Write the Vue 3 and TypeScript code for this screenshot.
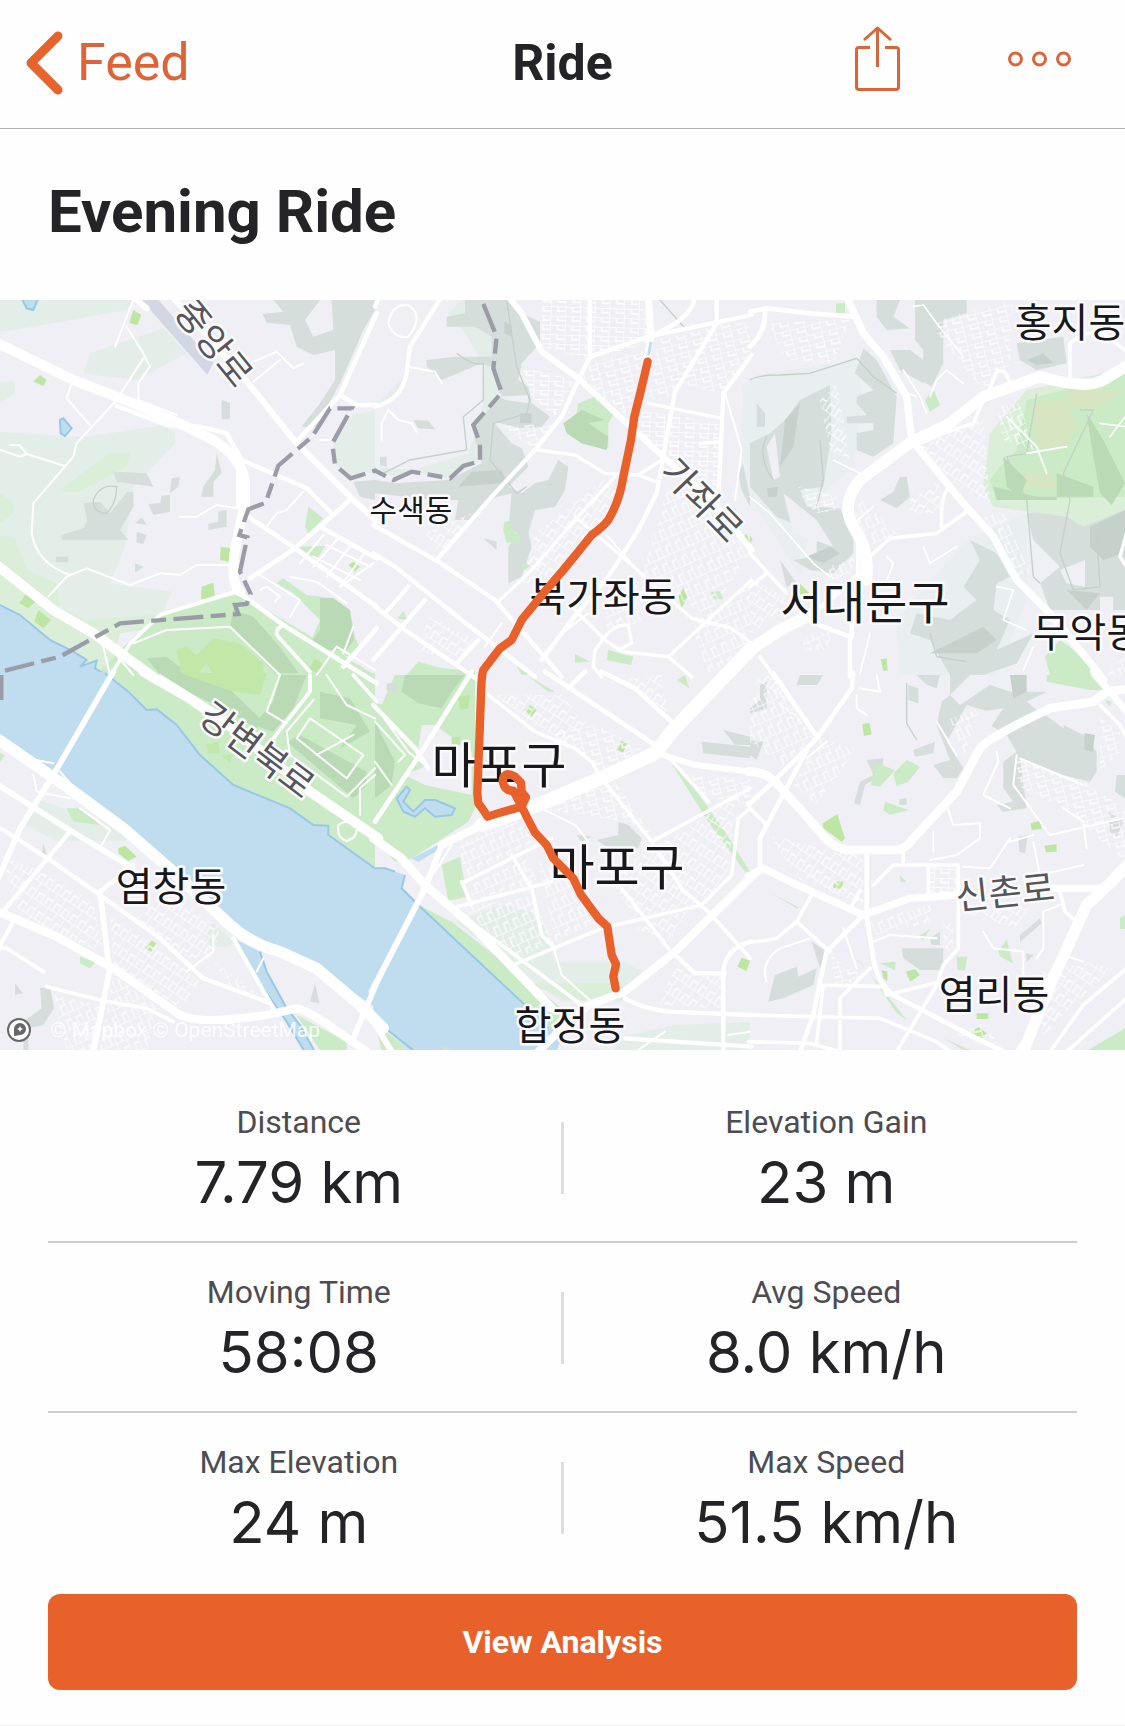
<script setup lang="ts">
interface Shape { c: string; d: string }
interface Road { w: number; d: string }
interface Tile { x: number; y: number; areas: Shape[]; streets: Road[]; roads: Road[] }
interface Place { text: string; x: number; y: number; size: number; angle?: number; minor?: boolean }

const stats = [
  [{ label: 'Distance', value: '7.79 km' }, { label: 'Elevation Gain', value: '23 m' }],
  [{ label: 'Moving Time', value: '58:08' }, { label: 'Avg Speed', value: '8.0 km/h' }],
  [{ label: 'Max Elevation', value: '24 m' }, { label: 'Max Speed', value: '51.5 km/h' }],
]

const places: Place[] = [
  { text: '중앙로', x: 214, y: 43, size: 36, angle: 51, minor: true },
  { text: '가좌로', x: 702, y: 200, size: 36, angle: 46, minor: true },
  { text: '강변북로', x: 257, y: 450, size: 36, angle: 37, minor: true },
  { text: '신촌로', x: 1005, y: 592, size: 36, angle: -6, minor: true },
  { text: '수색동', x: 411, y: 210, size: 30 },
  { text: '북가좌동', x: 603, y: 296, size: 40 },
  { text: '홍지동', x: 1070, y: 22, size: 40 },
  { text: '서대문구', x: 865, y: 302, size: 46 },
  { text: '무악동', x: 1088, y: 332, size: 40 },
  { text: '염창동', x: 171, y: 586, size: 40 },
  { text: '마포구', x: 499, y: 465, size: 49 },
  { text: '마포구', x: 617, y: 567, size: 49 },
  { text: '합정동', x: 570, y: 725, size: 40 },
  { text: '염리동', x: 994, y: 694, size: 40 },
]

// Each tile covers a third of the map's width and half of its height.
const tiles: Tile[] = [
  {
    x: 0, y: 0,
    areas: [
      { c: 'pale', d: 'M0 0H400L380 30L100 80L0 95ZM270 160L490 85L560 160L410 240L250 220ZM0 245H45V280L0 310ZM0 395L250 412L490 375L525 400V430L400 560L375 740L330 850L515 875L490 940L280 1000L0 780Z' },
      { c: 'light', d: 'M170 575L330 460L390 458L380 500L235 575ZM0 580L40 610V640L0 670ZM0 705L45 715L80 810L170 850L180 925L260 960L460 945L600 920L700 900L640 960L360 1000L330 1125H250L220 1070L0 915Z' },
      { c: 'park', d: 'M720 880L850 960L1125 1125H290L400 1010L480 950ZM850 835L920 885L1000 895L1050 930L1065 1010L1078 1040L1040 1070H970L930 1030L960 960L880 880L830 850ZM915 680L925 620L970 655L925 700ZM895 740L975 738L950 780Z' },
      { c: 'hill', d: 'M700 930L760 950L835 1035L900 1125H830L690 980ZM440 1075L500 1070L570 1125H480ZM960 895H1000L1050 930L1062 1020L1040 1050H960L930 1030L960 990Z' },
      { c: 'bright', d: 'M400 30L424 45L412 76L388 68ZM100 245L120 225L140 240L130 258ZM662 740L690 745L688 785L660 780ZM605 860L640 848L645 895L603 898ZM80 880L110 900L85 925L58 910ZM115 930L153 960L130 985L103 965ZM1045 795L1060 785L1080 800L1065 815ZM945 1075L972 1095L955 1120L928 1105Z' },
      { c: 'lime', d: 'M530 1050L560 1040L590 1065L640 1015L720 1030L790 1090V1125H640L620 1090L590 1125H545Z' },
      { c: 'pale', d: 'M1125 330L1060 345L1000 430L1008 495L1052 535L1125 512Z' },
      { c: 'wood', d: 'M820 0H1125V30L1090 90L1060 160L1020 250L950 380H905L960 310L1005 240V150L940 165L890 140L870 75L800 68L788 42L850 35Z' },
      { c: 'ground', d: 'M915 60L960 0H995L1000 90L940 110Z' },
      { c: 'wood', d: 'M340 515L440 520L460 560L350 545ZM185 705L250 685L262 660L250 610L300 605L330 640L380 577H400V620L360 690L385 720H185ZM515 535L540 530L535 560L510 580ZM445 612L480 610L485 588L510 585V635L460 645ZM650 460L665 520L640 545V590H603L610 560L645 510ZM625 672L655 665V635L680 630V680L625 690ZM665 300L690 310V358H665ZM168 770H205V787H168ZM410 695L440 705L430 732L410 728ZM405 670L425 652L440 675ZM405 790L430 800L405 818ZM1060 545L1125 540V600L1080 590Z' },
      { c: 'runway', d: 'M425 0H475L640 188L622 224Z' },
      { c: 'water', d: 'M-10 910L60 945L150 1020L220 1055L260 1080L240 1100L290 1082L285 1105L325 1135H-10ZM65 -5L80 25L100 30L115 -5ZM180 360L190 355L215 385L195 408L182 400Z' },
      { c: 'shore', d: 'M-10 910L60 945L150 1020L220 1055L260 1080L240 1100L290 1082L285 1105L325 1130M65 -5L80 25L100 30L115 -5M180 360L190 355L215 385L195 408L182 400Z' },
    ],
    streets: [
      { w: 6, d: 'M400 0L345 140M380 80L430 160L450 200L415 250L415 300L530 345M430 175L350 300L230 430L220 470L100 610L95 700Q110 790 210 825M215 250L200 295L270 375M0 450L60 470L80 462L195 498M30 435L60 436L80 462M145 890L200 830L260 805L390 855L480 820L540 825L590 795H690M540 650H590L650 615L710 625M750 190L830 155L880 205L910 190M840 180L760 245M800 680L830 640L860 630L910 575M960 420H1000M780 825L900 900L870 950M870 830L950 845L1040 910M970 705L900 790M1010 720L940 800M1050 740L980 830M1090 765L1020 860M940 770L1080 840M980 735L1110 800M1020 860L1120 790M400 1030L500 990L690 980L840 1125M300 1000L330 1125M320 1030L400 1125M780 870L800 860L840 890L825 905M950 1125L1010 1040L1125 1110M1060 980L1030 1060' },
    ],
    roads: [
      { w: 30, d: 'M-10 128L220 240L400 310L560 380L640 420Q720 470 735 540V610L705 750Q690 850 720 875' },
      { w: 13, d: 'M350 318L500 375L600 380L680 400L725 480L920 565L990 635M715 500V620' },
      { w: 30, d: 'M-10 795L160 930L280 1000L465 1135' },
      { w: 18, d: 'M400 -10L440 25M500 -30L745 250L890 430L1050 590L1130 665' },
      { w: 14, d: 'M890 425L1020 285L1130 40M1020 285L1070 315H1130M1050 600L885 745L750 835M745 650L885 745L1130 920M960 680L1130 775M720 880L850 975L1130 1150M1130 985L1030 1100' },
      { w: 11, d: 'M720 870L640 895L480 945L390 1030L330 1130M850 975Q820 990 835 1010L930 1115' },
    ],
  },
  {
    x: 1125, y: 0,
    areas: [
      { c: 'pale', d: 'M0 510L60 530L115 515L230 535L315 480L300 380L380 280L360 120L320 0H260L100 150V220L0 320Z' },
      { c: 'ground', d: 'M0 320L70 290L105 140L200 20L270 100L330 200L320 340L280 460L115 510L0 500Z' },
      { c: 'wood', d: 'M215 50L270 40V0H400L440 40L495 65V130L440 190L430 240L460 260L470 310L525 350L500 380L430 385L370 370L440 440L460 500L400 560L440 580L480 550L520 540L550 480L580 500L570 570L540 620L480 630L460 700L470 740L440 830L400 850V740L430 700L400 690L410 580L330 600L300 660H240L250 600H180L0 580V540L60 550L220 540L320 490L290 380L380 290L350 200L320 190L200 240L155 200V180L240 170H350V110L300 80H215ZM115 360L160 362L180 388L130 385ZM325 715L365 725V750ZM1090 520L1125 450V620L1100 570ZM15 470H35V500L15 495Z' },
      { c: 'ground', d: 'M375 290L460 285V310L390 300ZM355 365L420 380L500 430L470 460L410 430Z' },
      { c: 'dark', d: 'M250 560L290 515L380 510L395 548ZM435 340H470V370H435ZM388 65L410 75V110L388 100Z' },
      { c: 'park', d: 'M610 310L660 290L715 345L700 370V445L620 430L570 390L600 365ZM388 665L410 662L415 695L440 705L430 728H395L385 690ZM435 785L470 795L450 810ZM1008 875L1040 873L1043 898H1010ZM700 1050L775 1070L768 1095L695 1080ZM600 1062L645 1085L600 1088ZM68 955L85 933L98 962ZM90 1130L130 1085L200 1105L300 1112V1130ZM425 1098L460 1125H440Z' },
      { c: 'hill', d: 'M565 370L620 330L690 360L640 370L700 410L695 450L620 430L575 400Z' },
      { c: 'bright', d: 'M910 890L925 865L938 890L920 925ZM1098 715L1115 702L1125 730Z' },
    ],
    streets: [
      { w: 0, d: 'M500 0H820V130L640 180L500 140ZM440 200L600 240L540 350L470 290ZM1030 370V600L900 500L780 400L800 330Z' },
      { w: 1, d: 'M640 190L810 150L760 350L620 240ZM850 120L1020 80L890 290L820 300ZM1030 70H1125V160L1040 280L910 250ZM380 380L540 370L480 450Z' },
      { w: 2, d: 'M480 700L700 530L730 560L690 690L540 850L440 850ZM150 700L290 640L200 770ZM160 950L300 1020L240 1090L130 1050Z' },
      { w: 3, d: 'M880 560L1030 600L1125 760L1000 950L800 830ZM950 980L1125 850V1060L1000 1120ZM700 850L830 860L800 970L690 990Z' },
      { w: 6, d: 'M40 70Q50 10 100 15Q150 50 100 110Q60 120 40 70M100 200L180 215L200 250M40 330L20 370V420M40 330L70 360L110 370L125 395M1050 280L1100 450L1080 600M690 700L830 860M560 1000L640 940M380 970L330 1040' },
    ],
    roads: [
      { w: 18, d: 'M400 -10L440 40L500 155L610 235L745 360L870 475L1000 590L1130 750' },
      { w: 20, d: 'M820 -10L828 110L790 300' },
      { w: 13, d: 'M1130 45L820 110L645 170L610 240L560 350L480 450L350 590L185 780M960 -10Q950 60 830 105M645 -10V170M1025 -10V70L900 275L870 440L845 580L790 690L700 830L590 960L500 1080M1130 165L1045 280L1030 600M200 -10L105 140L95 220Q80 300 0 320M20 -30L0 20' },
      { w: 10, d: 'M820 310L1040 355M490 450L600 465L690 520L790 525L860 480M975 430L1040 425M370 905L470 810L600 660L720 530M790 525L840 545' },
      { w: 13, d: 'M-5 675L190 785L360 900L560 1130M-5 760L60 800L260 960L480 1130M0 920L90 990L310 1140M150 900L-5 1080M100 860L30 940M310 1020L245 1090' },
      { w: 10, d: 'M600 650L730 760L950 955L1070 985L1130 1030M600 930L690 1020L740 1055L880 1070L950 1130M690 1010Q720 970 760 975L770 1030L730 1050M690 1010L660 1050L655 1100L680 1130M1130 840L880 1070' },
    ],
  },
  {
    x: 2250, y: 0,
    areas: [
      { c: 'mist', d: 'M-30 450L-20 260L20 225L320 180L340 300L310 500L200 600L150 830L0 590ZM440 960L650 720L830 640V900L740 1125H450Z' },
      { c: 'wood', d: 'M380 0H450L430 50L478 85L410 90L380 50ZM495 0H650V40L580 60V190L545 260L520 245V150L495 120ZM340 145L380 180L440 290L430 430L370 470L320 450V400L370 390V370H290V350L350 345L320 310V290L370 270L315 220ZM420 150H480L520 180V250L450 210ZM0 430L60 400L105 360L150 300L240 255L245 400L220 560L150 570L170 620L270 625L310 720V760L250 820L180 810L130 780L200 770V700L80 650L0 560ZM90 780L140 850L110 860ZM20 310L45 340V380H20ZM800 130L940 110L950 190L860 210L810 180ZM390 600L430 575L450 530H470L480 590L440 625ZM830 640L1125 600V930H900L870 850L930 800L850 720ZM660 720L740 760L780 830L740 850L730 930L780 960L740 1050L850 1000L800 1090L700 1125H600L540 1020L480 1000L500 940L600 960L680 900L640 860L690 780Z' },
      { c: 'ground', d: 'M50 440L75 400L90 530L70 540ZM100 580L200 660L250 740L130 700ZM930 810L1005 780V860L950 850ZM1050 890H1090V930H1050Z' },
      { c: 'light', d: 'M730 620L700 560L720 400L830 270L1125 205V630L1000 680L950 650Z' },
      { c: 'park', d: 'M800 450L830 300L1125 220V590L740 600L720 540L750 500ZM525 300L550 268L570 315L540 335ZM258 10H285V40H258ZM885 1070L930 1020L960 1040L1045 1125H900Z' },
      { c: 'beige', d: 'M850 310L950 300L980 380L940 450L860 440ZM950 270H1125L1030 330L960 310ZM800 520H900L930 560H820Z' },
      { c: 'hill', d: 'M730 560L860 590H1030V560L920 520V600H740ZM1010 340L1060 420L1125 550L1085 615L1050 580L1030 470ZM760 470L830 540L810 590L770 560Z' },
      { c: 'dark', d: 'M1020 680L1125 630V760L1060 780L1020 740ZM830 180L880 160L910 190L860 195ZM50 565L85 560L80 590L55 590ZM950 870L1050 880L1010 930ZM540 1060L700 980L740 1020L680 1060ZM105 360L150 310L130 440L90 500ZM170 770L240 740L270 760L220 790Z' },
      { c: 'bright', d: 'M392 1078L410 1075L413 1112H400ZM150 850L178 880L145 885ZM0 705L8 720L0 728Z' },
    ],
    streets: [
      { w: 1, d: 'M60 70L300 60L250 190L100 180ZM560 60L790 0L780 200L700 270L640 200L560 100ZM145 560L265 590V630L200 640L160 600Z' },
      { w: 2, d: 'M210 300L260 250L300 480L240 450ZM510 440L700 350L720 620L620 560ZM480 600L570 540V640H480ZM0 830L120 900L40 980L0 1000Z' },
      { w: 3, d: 'M330 590L440 700L370 740L310 650ZM700 650L760 640L840 820L800 830ZM740 320L810 310L850 450L760 420ZM230 800L320 770L300 820L250 850ZM160 1010L250 990L230 1050H160ZM1050 1125L1125 1070V1125Z' },
      { w: 5, d: 'M490 20L520 15L560 70L640 170M460 210L510 290L530 340M450 270L500 290M770 350L860 440L890 520M830 460L950 440M1050 370L1125 380M1080 410L1125 350M640 250L590 210L560 240L540 290M250 480L330 520M0 590L60 640L130 720L190 790L240 830M410 770L430 790L410 840M520 740L540 790L620 740M370 620L300 680M740 860L790 870L760 960L830 990M330 1120L360 1000M820 1110L850 1040' },
    ],
    roads: [
      { w: 22, d: 'M290 -10L340 100L400 170L470 290L485 420L640 610L730 710L800 840L900 940L1030 1100L1060 1140' },
      { w: 34, d: 'M1135 195L1060 240Q1010 270 870 230L700 290L600 370L485 425L330 540Q270 610 310 680Q360 750 350 840' },
      { w: 36, d: 'M0 1050L90 990L180 945' },
      { w: 16, d: 'M160 950L220 915L355 800' },
      { w: 14, d: 'M0 35L50 25L180 40L310 50M45 30Q50 90 0 140M180 965L300 1010V1130M325 740V860L305 960V1010' },
      { w: 11, d: 'M710 290L740 215Q765 200 780 250M510 430L580 400L670 370L700 300M650 635L560 700L420 715L360 770M600 560Q570 580 575 680M960 230V130L1000 100H1060L1125 150M0 760L110 880M0 860L50 820M1130 700L1110 770L1130 800M30 1070L75 1135' },
    ],
  },
  {
    x: 0, y: 1125,
    areas: [
      { c: 'park', d: 'M290 -5H1125V600L985 480V452H940L870 400L700 330L600 240L530 150L470 103L440 105L380 50Z' },
      { c: 'hill', d: 'M840 0H920L880 100L820 170L760 150L820 80ZM960 50L1050 70L1110 170L1020 220L1070 150L960 130ZM860 200L1060 370L1100 330V290L900 180ZM440 -5H640L780 130L770 160L650 90L560 50Z' },
      { c: 'lime', d: 'M545 -5H800L780 60L700 50L640 30ZM620 210L655 200L660 235H625ZM665 245L700 235L690 262Z' },
      { c: 'water', d: 'M-10 -10H315L385 50L440 105L470 103L530 150L600 240L700 330L870 400L940 450L985 452V480L1130 585V1000L950 880L780 810L650 700L520 580L370 460L170 310L-10 200ZM700 790L780 830L800 890L860 1000L900 1050L950 1140H920L860 1040L790 940Z' },
      { c: 'shore', d: 'M315 -5L385 50L440 105L470 103L530 150L600 240L700 330L870 400L940 450L985 452V480L1125 580M780 830L800 890L860 1000L900 1050L950 1140M920 1140L860 1040L790 940L700 790' },
      { c: 'pale', d: 'M120 375L350 455L380 497H170L75 450ZM615 770L640 745L700 800L690 815H630Z' },
      { c: 'park', d: 'M200 400H240L300 450L220 440ZM240 845L285 862L270 880L240 865ZM890 1020L1040 1100V1125H960ZM0 235L15 240L0 262Z' },
      { c: 'bright', d: 'M355 520L375 512L410 545L385 558L355 535ZM435 820L455 797L468 805L455 832Z' },
      { c: 'wood', d: 'M120 940L150 935L162 1000L130 1050L85 1060V1125H70V1040L125 1000ZM45 925L68 955L45 960ZM930 980L945 925L958 985ZM130 505L140 540H125Z' },
    ],
    streets: [
      { w: 2, d: 'M0 540L150 600L280 680L310 830L60 740ZM330 720L450 800L600 920L540 1000L340 870ZM500 640L660 760L640 850L560 850L400 740Z' },
      { w: 3, d: 'M340 900L480 1000L440 1125H300ZM640 860L780 960L700 950ZM160 960L300 990L280 1125H200Z' },
      { w: 6, d: 'M930 130L1090 240L1040 310L890 190ZM940 75L860 170L870 240L1040 365L1125 280M950 240L1060 180M840 0L800 110L850 140M1015 450Q1010 490 1040 498Q1075 490 1070 450Q1040 430 1015 450ZM480 0L780 190M240 400L330 465L300 520M80 250L160 265M180 290L250 370M100 300L110 350L210 370M640 780V830L560 890M790 850L770 890M980 0L1040 90L1125 130M1125 300L1080 340V420' },
    ],
    roads: [
      { w: 34, d: 'M-10 190L200 335L370 460L520 590L690 750Q760 810 840 830L950 880L1080 990L1150 1060' },
      { w: 17, d: 'M340 -10L160 300L60 460L-5 610M-5 330L200 460L400 580M1140 900L1060 1090M300 650L325 860M330 880L280 1130' },
      { w: 30, d: 'M430 -10L560 65L700 160L930 350L1135 490' },
      { w: 13, d: 'M-5 455L150 555L300 660L480 790L610 910L800 980M210 470L0 720M400 570L300 650M700 790L820 1000M40 740L-5 820' },
      { w: 25, d: 'M-5 710L170 785L340 880L540 1020Q600 1050 800 1020L890 1000Q930 1010 1000 1060L1100 1130' },
      { w: 11, d: 'M-5 820H20L130 890M140 935L300 975L440 1000L520 1040M930 0V50L820 190M1060 0L1130 80' },
    ],
  },
  {
    x: 1125, y: 1125,
    areas: [
      { c: 'park', d: 'M0 0H300V400L280 440L110 550L60 560L0 490Z' },
      { c: 'ground', d: 'M140 150H180L290 230V360L150 330L90 300L160 270L130 220ZM0 0H60L20 90L0 80Z' },
      { c: 'hill', d: 'M90 0H270L230 50L200 100L130 85L80 50ZM0 140L60 260L50 330L0 370Z' },
      { c: 'wood', d: 'M665 495L730 480V440L760 450L800 490L790 520H700ZM980 200L1125 215V250L985 235ZM1045 165L1125 185V210H1080ZM35 25H68V48H35ZM605 480L650 485L620 500Z' },
      { c: 'pale', d: 'M240 740L380 690L500 720L540 860H750L820 900L740 980H560L400 860ZM720 1090L900 1050L1125 1040V1125H720Z' },
      { c: 'light', d: 'M460 925H740V975H580Z' },
      { c: 'park', d: 'M130 690L230 740L560 1000V1090L450 990ZM200 570L255 545L275 665L220 678ZM880 250L910 270L1050 470L1125 590H1110L1000 440ZM905 15L930 0L943 40ZM455 0L540 50H520Z' },
      { c: 'bright', d: 'M448 105L465 90L485 105L470 125ZM740 197L755 205L745 233L727 225ZM1100 848L1125 858L1115 888L1087 875ZM250 65L285 60L280 100L255 105ZM230 185H255V210H230Z' },
      { c: 'water', d: 'M-5 580H30L60 590L90 600L80 640L130 690L300 850L450 990L560 1090L540 1140H120L-5 1030ZM65 370L95 335L105 345L85 380L115 410L150 375H180L240 400L230 420L180 425L150 400L120 425L85 410ZM110 550L250 480L200 520L130 560Z' },
      { c: 'shore', d: 'M0 580H30L60 590M90 600L80 640L130 690L300 850L450 990L520 1060M0 1035L120 1130M65 370L95 335L105 345L85 380L115 410L150 375H180L240 400L230 420L180 425L150 400L120 425L85 410Z' },
      { c: 'park', d: 'M0 1042L110 1130H20ZM200 1115L250 1130H200Z' },
    ],
    streets: [
      { w: 3, d: 'M250 510L420 430L480 500L270 610ZM290 630L450 550L490 620L290 680ZM260 700L480 660L530 800L430 850ZM490 560L620 620L690 730L540 800Z' },
      { w: 1, d: 'M510 180L660 150L800 220L700 290ZM480 400L720 320L830 480L760 440ZM920 300L1125 310V400L1080 380L1000 370Z' },
      { w: 2, d: 'M700 600L900 480L1080 370L1060 600L980 680L780 730ZM780 760L960 700L880 800ZM900 880L1040 900V1000L850 990ZM360 60L560 60L640 150L560 210L460 150ZM700 20L860 0L880 120L780 40Z' },
      { w: 6, d: 'M0 140L90 240L70 260M20 120L100 230L150 270M230 510L180 590M0 260L50 330M500 400L600 450L640 500M530 800L560 900L650 980M790 1125L870 1070M1060 1080L1125 1070' },
    ],
    roads: [
      { w: 42, d: 'M320 450L420 415L500 385L700 300L840 235L890 170L1125 -75' },
      { w: 26, d: 'M-5 490L80 550L150 630L300 760L530 1000' },
      { w: 24, d: 'M340 440L200 510' },
      { w: 18, d: 'M200 510L150 640L-10 950M-10 1030L50 1130M850 235L960 270L1130 290' },
      { w: 14, d: 'M290 -10L140 230L0 440M-5 90L120 220L160 280M510 -10L600 50L840 210M680 -10L780 40L900 150M580 40L630 -10' },
      { w: 11, d: 'M340 60L480 170L600 220L650 260L680 310L830 500L920 640L1010 720L1125 850M880 245L1000 380M415 870L680 760L980 690L1070 600L1090 430L1125 400M230 700L530 620M410 540L470 640L500 780L540 820M230 700L420 840L620 990M270 620L530 490M260 620L290 690M1125 340L830 500M740 640L880 820' },
      { w: 24, d: 'M1140 595L900 830L750 950L640 990L540 1080L490 1130' },
      { w: 13, d: 'M750 970Q800 1000 880 1010L1130 1020M890 830L960 895H1050M1130 800Q1045 820 1045 900V1130M750 1090L1130 1115' },
    ],
  },
  {
    x: 2250, y: 1125,
    areas: [
      { c: 'wood', d: 'M150 0H220L200 30H140ZM500 0H570L560 40L530 30ZM475 30L505 40V85L475 75ZM600 0H660L600 60L630 90L720 30L780 50H890L830 80L900 130L1000 180L1040 230V290L1020 320L900 290L810 250L830 400L760 410L740 390L790 380L760 340V260L800 230L770 180L720 150V110L650 90L590 200L640 280L620 310H580L550 270L600 255L560 150L575 80L600 60ZM490 225L555 200L550 235L495 245ZM350 255L400 250L395 300L345 330L330 390L312 385L330 320L370 300ZM455 820H580V885H510L460 850ZM540 790L570 770V810H545ZM75 900L140 875L145 905L200 880L190 930L100 970L55 980ZM185 800L230 830L210 880ZM805 485L833 480L825 535L808 530ZM810 780L870 730L875 745L810 800ZM1075 410L1120 440L1100 485L1080 470ZM0 100L30 75V30L50 20V100L0 115ZM0 195L40 200L20 255L0 240ZM1100 300H1125V370L1095 350ZM828 835L852 840L830 860ZM448 372L470 370V390H448Z' },
      { c: 'ground', d: 'M690 110L760 100L700 190ZM840 90L960 80L940 160L900 130Z' },
      { c: 'dark', d: 'M780 0H830V50L790 70ZM1003 175L1035 180L1028 230L1003 225Z' },
      { c: 'park', d: 'M890 0H1020L1060 45H1020L890 20ZM380 265L435 285L390 335L362 330ZM430 295L470 255L510 275L475 320L440 333ZM405 380L475 405L420 420L400 405ZM505 785L540 762L520 795ZM745 830L770 793L788 865L750 845ZM620 845H652L645 885H622ZM390 865L437 860L435 885ZM1015 1125L1125 1060V1125ZM1110 730L1125 720V762H1110ZM65 655L150 700H140ZM265 810L340 870L470 1035L440 1015L350 880ZM580 1090L660 1125H640ZM448 600L470 620H452ZM1065 75L1085 80L1078 95Z' },
      { c: 'bright', d: 'M218 445L262 418L285 490L275 500L220 460ZM337 148L358 143L365 178L342 183ZM842 445L870 437L875 462L845 465ZM883 512L920 508V530L888 532ZM250 622L280 618L275 642L250 638ZM468 890L495 882L510 900L480 920ZM395 885L412 890V918L400 910ZM665 1070L685 1055L710 1075L690 1097ZM680 1015H715V1032H680Z' },
    ],
    streets: [
      { w: 3, d: 'M0 60L80 30L190 190L100 270L0 200ZM210 190L310 220L280 280L200 390L130 330ZM600 130L690 100L640 250ZM360 740L540 690L550 740L380 780Z' },
      { w: 2, d: 'M60 480L250 530H340V690L140 610ZM640 710L850 690L800 760L720 740ZM850 900L1000 860L1090 880L960 1000L880 1080ZM580 745H610V820L580 840ZM0 20L70 0L180 180L60 60Z' },
      { w: 1, d: 'M800 250L1000 320L1125 400V560L940 400L800 330ZM1050 130L1110 170V230L1050 290ZM240 840L340 900L260 950ZM620 1080L700 1040L760 1125Z' },
      { w: 0, d: 'M540 570H620V650L540 660Z' },
      { w: 6, d: 'M590 390L610 450L690 445V490L620 540L540 555M740 230L745 260L700 360L780 400M800 240L790 330L900 480L1120 430M320 60V100L350 120M380 0L390 50L330 40M550 470V530M780 490L720 580L640 575M780 500L850 480M850 500L870 600L1000 570M930 690L880 710V820L860 850M700 770L730 820L820 830V900M50 920Q30 860 90 820L180 790M370 800L420 780L560 790M230 200L170 250M560 140L620 240M810 250L1000 330M940 400L1000 440L1010 520M280 760L320 880M1000 860L940 840M800 1125L860 1040' },
    ],
    roads: [
      { w: 26, d: 'M-5 290Q50 290 80 325L130 380L210 470Q240 515 290 525H440Q470 520 490 490L620 350L690 220Q710 190 900 100L1030 80L1070 50L1135 42' },
      { w: 22, d: 'M-5 605L40 580L120 620L340 720L480 670L620 660M880 640H1060' },
      { w: 34, d: 'M1140 560L1080 625L1010 690L960 800L900 930L820 1130' },
      { w: 14, d: 'M70 -5L200 185M310 -5L305 40L200 190L80 310L-5 390M170 225L130 300L30 490V580M350 530V720L370 850Q380 920 430 960L640 1070L760 1130M340 720L230 830L210 920L190 1020L150 1130' },
      { w: 11, d: 'M460 520V560M370 630L430 570H625V820L580 870L560 930L440 1130M535 570V670M140 740L240 830M185 660L140 740L80 790Q40 800 0 800M220 930L400 935L410 960L570 920M-5 1020L390 1030L560 1100L600 1130M360 880L270 970V1130M-5 1100L180 1105L270 1130M1130 880L1000 990L900 1130M1130 970L950 1130M930 650L945 710L980 740M1050 90L1110 150L1130 190M220 930L200 1100M0 400L50 450M300 700L330 650' },
      { w: 20, d: 'M1030 -10L1130 110' },
    ],
  },
]

// Street widths below 4 name one of the fine street grids; wider ones are single lines.
const isGrid = (w: number) => w < 4
</script>

<template>
  <main class="page">
    <header class="bar">
      <a class="back" href="#feed">
        <svg class="chevron" width="37" height="64" viewBox="0 0 37 64" aria-hidden="true">
          <path d="M32 5L5 32L32 59" />
        </svg>
        <span>Feed</span>
      </a>
      <h2 class="bar-title">Ride</h2>
      <div class="actions">
        <button type="button" aria-label="Share">
          <svg width="45" height="66" viewBox="0 0 45 66" aria-hidden="true">
            <path d="M15 21.500H4Q1.500 21.500 1.500 24V61Q1.500 63.500 4 63.500H41Q43.500 63.500 43.500 61V24Q43.500 21.500 41 21.500H30" />
            <path d="M22.500 41V2M9 14L22.500 2L36 14" />
          </svg>
        </button>
        <button type="button" aria-label="More options">
          <svg width="63" height="16" viewBox="0 0 63 16" aria-hidden="true">
            <circle cx="7.500" cy="8" r="6" />
            <circle cx="31.500" cy="8" r="6" />
            <circle cx="55.500" cy="8" r="6" />
          </svg>
        </button>
      </div>
    </header>

    <section class="heading">
      <h1>Evening Ride</h1>
    </section>

    <svg class="map" viewBox="0 0 1125 750" role="img" aria-label="Route map">
      <defs>
        <pattern id="grid0" width="44" height="28" patternUnits="userSpaceOnUse" patternTransform="rotate(2)">
          <path d="M0 0H44M0 0V28M22 0V14H44" />
        </pattern>
        <pattern id="grid1" width="46" height="29" patternUnits="userSpaceOnUse" patternTransform="rotate(-14)">
          <path d="M0 0H46M0 0V29M24 0V14H46" />
        </pattern>
        <pattern id="grid2" width="50" height="30" patternUnits="userSpaceOnUse" patternTransform="rotate(-56)">
          <path d="M0 0H50M0 0V30M26 30V15H0" />
        </pattern>
        <pattern id="grid3" width="48" height="32" patternUnits="userSpaceOnUse" patternTransform="rotate(66)">
          <path d="M0 0H48M0 0V32M22 0V16H48" />
        </pattern>
      </defs>

      <rect class="ground" width="1125" height="750" />
      <g transform="scale(0.33333)">
        <g v-for="(tile, i) in tiles" :key="'area' + i" :transform="`translate(${tile.x} ${tile.y})`">
          <path v-for="(area, j) in tile.areas" :key="j" :class="area.c" :d="area.d" />
        </g>
        <g class="trails">
          <path d="M2250 240Q2270 225 2340 225L2430 220L2570 175L2620 230L2690 280M3110 280L3080 460L3020 470L3080 600L3100 830L3120 850M3240 330H3280L3190 520L3210 600L3180 760L3220 870L3300 860L3290 700L3375 640M2300 410Q2270 470 2320 540M2460 420L2470 540L2450 620M2790 1000L2810 1070L2900 1085M1370 160Q1420 200 1450 190V300L1390 350L1400 450L1230 480L1150 520M1520 0L1550 200L1590 300L1580 340L1480 370L1470 480L1550 580L1580 560M1980 0L2060 90M2720 1150V1270L2750 1320M280 600Q300 550 350 560Q350 610 320 640Q280 640 280 600" />
        </g>
        <g v-for="(tile, i) in tiles" :key="'street' + i" :transform="`translate(${tile.x} ${tile.y})`">
          <template v-for="(s, j) in tile.streets" :key="j">
            <path v-if="isGrid(s.w)" :d="s.d" :fill="`url(#grid${s.w})`" />
            <path v-else class="road" :d="s.d" :stroke-width="s.w" />
          </template>
        </g>
        <g v-for="(tile, i) in tiles" :key="'road' + i" :transform="`translate(${tile.x} ${tile.y})`">
          <path v-for="(r, j) in tile.roads" :key="j" class="road" :d="r.d" :stroke-width="r.w" />
        </g>
        <path class="border" d="M15 1112L180 1070L360 970L715 942L705 915L740 912L752 882L720 815L742 712L718 705L745 628L797 608L835 497L938 408L990 325H1055L997 430L1005 495L1052 535L1125 512L1180 540L1235 515L1350 535L1390 498L1440 483V430L1420 375L1505 278L1480 205L1490 110L1445 0" />
        <path class="border" d="M4 1125V1200" />
        <path class="brook" d="M1953 125L1946 165" />
      </g>

      <g
        v-for="(p, i) in places" :key="'place' + i" class="place" :class="{ minor: p.minor }"
        :transform="`translate(${p.x} ${p.y}) rotate(${p.angle ?? 0})`"
      >
        <text :y="Math.round(p.size * 0.37)" :font-size="p.size">{{ p.text }}</text>
      </g>

      <g transform="scale(0.33333)">
        <path class="route" d="M1943 185L1923 270L1903 350L1893 420L1870 530Q1860 600 1825 660Q1810 680 1775 705L1735 755L1690 810L1630 880L1565 960L1535 1020L1500 1045L1450 1110Q1445 1125 1444 1160L1432 1480L1435 1510L1450 1530L1463 1550L1500 1538L1565 1520L1578 1492L1565 1475L1563 1448L1545 1430Q1510 1410 1508 1445Q1515 1475 1540 1472L1565 1520L1585 1560L1605 1598L1640 1635L1660 1675L1720 1735L1742 1783L1795 1855L1822 1880L1835 1965L1848 1993L1840 2030L1847 2065" />
      </g>

      <g class="mark">
        <circle cx="19" cy="730" r="11" />
        <path d="M14 736V729A6 6 0 1 1 20 735ZM20 726L21 728L23 729L21 730L20 732L19 730L17 729L19 728Z" />
      </g>
      <text class="credit" x="50" y="737">© Mapbox © OpenStreetMap</text>
    </svg>

    <section class="stats">
      <div v-for="(row, i) in stats" :key="i" class="row">
        <dl v-for="s in row" :key="s.label" class="stat">
          <dt>{{ s.label }}</dt>
          <dd>{{ s.value }}</dd>
        </dl>
      </div>
    </section>

    <div class="footer">
      <button type="button" class="analysis">View Analysis</button>
    </div>
  </main>
</template>

<style>
body { margin: 0; background: #fefefe; }
</style>

<style scoped>
.page {
  font-family: Roboto, "Noto Sans CJK KR", sans-serif;
  color: #242428;
  background: #fefefe;
  border-bottom: 1px solid #f0f0f2;
}
.page * { box-sizing: border-box; }
h1, h2, dl, dd { margin: 0; }
button { border: 0; padding: 0; background: none; font: inherit; cursor: pointer; }

.bar {
  display: grid;
  grid-template-columns: 1fr auto 1fr;
  align-items: center;
  height: 129px;
  padding: 0 54px 2px 26px;
  border-bottom: 1px solid #b2b2b4;
  font-size: 50px;
  line-height: 60px;
}
.back { display: flex; align-items: center; gap: 14px; color: #dc6437; font-size: 52px; text-decoration: none; }
.chevron path { fill: none; stroke: #e8622c; stroke-width: 9; stroke-linecap: round; stroke-linejoin: round; }
.bar-title { font-size: 50px; font-weight: 700; padding-left: 28px; }
.actions { display: flex; justify-content: flex-end; align-items: center; gap: 108px; }
.actions button { display: flex; padding-bottom: 8px; }
.actions svg { fill: none; stroke: #d96538; stroke-width: 3; stroke-linejoin: round; }

.heading { padding: 47px 48px 52px; }
h1 { font-size: 60px; line-height: 72px; font-weight: 700; }

.map { display: block; width: 100%; height: auto; }
.ground { fill: #efeff5; }
.mist { fill: #e9eef0; }
.pale { fill: #e4eee8; }
.light { fill: #daeed8; }
.park { fill: #caebc6; }
.hill { fill: #b9dab5; }
.lime { fill: #c1e8a8; }
.bright { fill: #bde6a2; }
.beige { fill: #d7e5c3; }
.wood { fill: #d5dedb; }
.dark { fill: #c6d1cc; }
.runway { fill: #d1d7e3; }
.water { fill: #bfddef; }
.shore { fill: none; stroke: #98c8e8; stroke-width: 6; }
pattern path { fill: none; stroke: #fff; stroke-width: 5; stroke-opacity: 0.8; }
.road { fill: none; stroke: #fff; stroke-linejoin: round; stroke-linecap: round; }
.trails { fill: none; stroke: #c5d0ca; stroke-width: 4; }
.border { fill: none; stroke: #9c9ca9; stroke-width: 13; stroke-dasharray: 90 22 45 22; }
.brook { fill: none; stroke: #bfddef; stroke-width: 9; }
.route { fill: none; stroke: #e8602a; stroke-width: 25; stroke-linecap: round; stroke-linejoin: round; }
.place { font-family: "Noto Sans CJK KR", sans-serif; fill: #18181b; text-anchor: middle; }
.place text { stroke: #fafafc; stroke-width: 5px; stroke-linejoin: round; paint-order: stroke; }
.place.minor { fill: #55555a; }
.mark circle { fill: #fff; stroke: #66666b; stroke-width: 2; }
.mark path { fill: #66666b; fill-rule: evenodd; }
.credit { fill: #fff; fill-opacity: 0.85; font-size: 21px; }

.stats { padding: 23px 48px 0; }
.row {
  position: relative;
  display: grid;
  grid-template-columns: 1fr 1fr;
  gap: 26px;
  height: 170px;
  padding-top: 29px;
  border-bottom: 2px solid #cdcdd2;
}
.row:last-child { border-bottom: 0; }
.row::after {
  content: "";
  position: absolute;
  left: 50%;
  top: 49px;
  width: 3px;
  height: 72px;
  margin-left: -2px;
  background: #dedee2;
}
.stat { text-align: center; }
dt { font-size: 32px; line-height: 40px; color: #4c4c52; }
dd { margin-top: 8px; font-family: Inter, sans-serif; font-size: 58px; line-height: 64px; }

.footer { padding: 11px 48px 35px; }
.analysis {
  display: block;
  width: 100%;
  height: 96px;
  border-radius: 12px;
  background: #e8602a;
  color: #fff;
  font-size: 32px;
  font-weight: 700;
}
</style>
